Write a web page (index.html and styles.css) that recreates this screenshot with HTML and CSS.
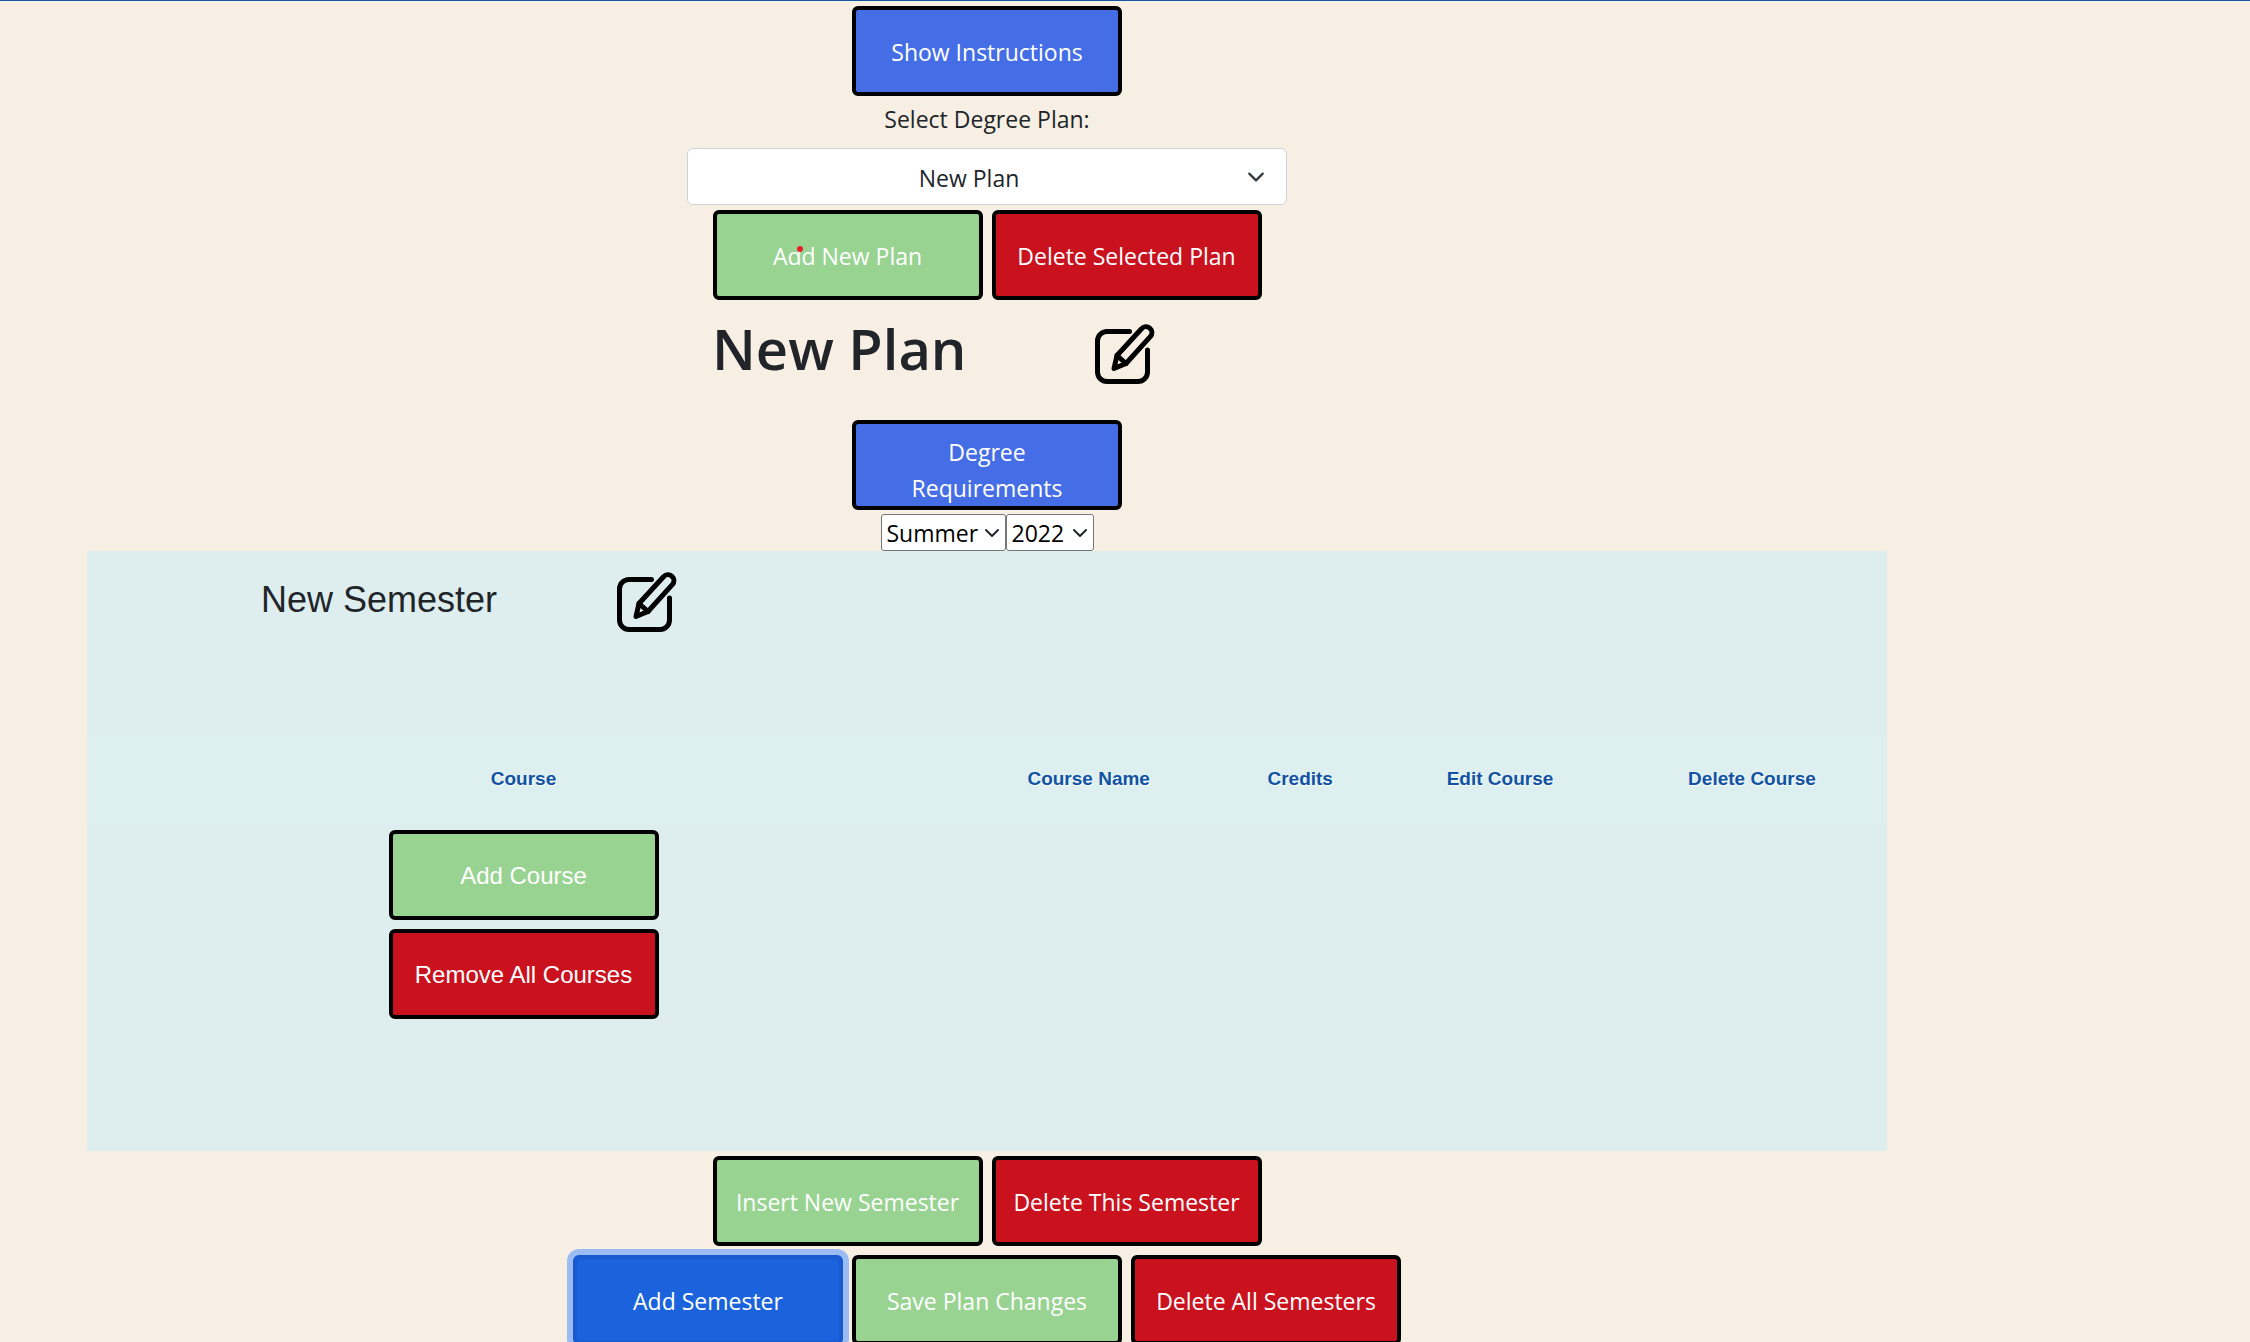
FILE: index.html
```html
<!DOCTYPE html>
<html lang="en">
<head>
<meta charset="utf-8">
<title>Degree Planner</title>
<link rel="stylesheet" href="styles.css">
</head>
<body>
<svg class="defs" aria-hidden="true">
  <symbol id="edit" viewBox="0 0 60 60">
    <g fill="none" stroke="#000" stroke-width="5" stroke-linecap="round" stroke-linejoin="round">
      <path d="M34.500 7.500H12a9.500 9.500 0 0 0-9.500 9.500v31A9.500 9.500 0 0 0 12 57.500h31a9.500 9.500 0 0 0 9.500-9.500V26"/>
      <path d="M22 31.500L46.500 4.800a5.800 5.800 0 0 1 9 7.500L31 39.500L19 44.500z"/>
      <path d="M22 31.500L31 39.500"/>
    </g>
  </symbol>
  <symbol id="chevron" viewBox="0 0 16 16">
    <path d="M2 5l6 6 6-6" fill="none" stroke="currentColor" stroke-width="2" stroke-linecap="round" stroke-linejoin="round"/>
  </symbol>
</svg>
<main class="planner">
  <button class="btn blue" type="button">Show Instructions</button>
  <label class="plan-label" for="plan">Select Degree Plan:</label>
  <div class="select plan-select">
    <select id="plan"><option>New Plan</option></select>
    <svg class="arrow"><use href="#chevron"/></svg>
  </div>
  <div class="row plan-actions">
    <button class="btn green" type="button">Add New Plan<span class="pointer"></span></button>
    <button class="btn red" type="button">Delete Selected Plan</button>
  </div>
  <header class="plan-title">
    <h1>New Plan</h1>
    <button class="edit" type="button" aria-label="Edit plan name"><svg><use href="#edit"/></svg></button>
  </header>
  <button class="btn blue" type="button">Degree Requirements</button>
  <div class="term">
    <div class="select season">
      <select aria-label="Season"><option>Summer</option></select>
      <svg class="arrow"><use href="#chevron"/></svg>
    </div>
    <div class="select year">
      <select aria-label="Year"><option>2022</option></select>
      <svg class="arrow"><use href="#chevron"/></svg>
    </div>
  </div>
  <section class="semester">
    <header class="semester-title">
      <h2>New Semester</h2>
      <button class="edit" type="button" aria-label="Edit semester name"><svg><use href="#edit"/></svg></button>
    </header>
    <table class="courses">
      <thead>
        <tr>
          <th class="c-course">Course</th>
          <th class="c-name">Course Name</th>
          <th class="c-credits">Credits</th>
          <th class="c-edit">Edit Course</th>
          <th class="c-delete">Delete Course</th>
        </tr>
      </thead>
      <tbody>
        <tr>
          <td>
            <div class="course-actions">
              <button class="btn green" type="button">Add Course</button>
              <button class="btn red" type="button">Remove All Courses</button>
            </div>
          </td>
          <td></td><td></td><td></td><td></td>
        </tr>
      </tbody>
    </table>
  </section>
  <div class="row semester-actions">
    <button class="btn green" type="button">Insert New Semester</button>
    <button class="btn red" type="button">Delete This Semester</button>
  </div>
  <div class="row">
    <button class="btn active" type="button">Add Semester</button>
    <button class="btn green" type="button">Save Plan Changes</button>
    <button class="btn red" type="button">Delete All Semesters</button>
  </div>
</main>
</body>
</html>
```

FILE: styles.css
```css
* { box-sizing: border-box; }

html { scrollbar-width: none; }

body {
  margin: 0;
  height: 100vh;
  overflow: hidden;
  background: #f8efe4;
  border-top: 1px solid #1556a3;
  color: #212529;
  font: 23px/36px "Open Sans", "Noto Sans", sans-serif;
}

button, select { font: inherit; }

.defs { display: none; }

.planner {
  display: flex;
  flex-direction: column;
  align-items: center;
  padding: 5px 276px 0 0;
}

.btn {
  position: relative;
  flex: none;
  width: 270px;
  height: 90px;
  padding: 10px 16px 8px;
  border: 4px solid #000;
  border-radius: 6px;
  color: #fff;
}

.blue { background: #456ee6; }
.green { background: #98d392; }
.red { background: #ca121f; }

.active {
  background: #1b63dd;
  border-color: #1a5ad0;
  box-shadow: 0 0 0 6px #9bbcf3;
}

.row { display: flex; gap: 9px; }

.pointer {
  position: absolute;
  left: 80px;
  top: 32px;
  width: 6px;
  height: 6px;
  border-radius: 50%;
  background: #ec1c24;
}

.plan-label { margin: 5px 0 11px; }

/* The arrow shares the grid cell of its select */
.select {
  display: grid;
  grid-template-rows: 100%;
  align-items: center;
  justify-items: end;
}

.select select {
  grid-area: 1 / 1;
  width: 100%;
  height: 100%;
  appearance: none;
  background: #fff;
  outline: none;
}

.arrow {
  grid-area: 1 / 1;
  width: 16px;
  height: 16px;
  pointer-events: none;
}

.plan-select {
  width: 100%;
  max-width: 600px;
  height: 57px;
}

.plan-select select {
  padding: 2px 54px 0 18px;
  border: 1px solid #ced4da;
  border-radius: 6px;
  color: #212529;
  text-align: center;
}

.plan-select .arrow {
  width: 18px;
  height: 18px;
  margin-right: 22px;
  color: #343a40;
}

.plan-actions { margin-top: 5px; }

.plan-title {
  display: grid;
  grid-template-columns: 1fr 1fr;
  justify-items: start;
  width: 550px;
  height: 120px;
  padding-top: 12px;
}

h1 {
  margin: 0;
  font-size: 56px;
  font-weight: 600;
  line-height: 72px;
}

.edit {
  width: 60px;
  height: 60px;
  padding: 0;
  border: 0;
  background: none;
}

.edit svg {
  display: block;
  width: 60px;
  height: 60px;
}

.plan-title .edit {
  justify-self: center;
  margin-top: 12px;
}

.term {
  display: flex;
  height: 37px;
  margin-top: 4px;
}

.term select {
  padding: 0 5px;
  border: 1px solid #767676;
  border-radius: 3px;
  color: #000;
}

.term .arrow { margin-right: 6px; }
.season { width: 125px; }
.year { width: 88px; }

.semester {
  align-self: stretch;
  min-height: 600px;
  margin: 0 87px;
  background: #deeeee;
  font-family: "Liberation Sans", Arial, sans-serif;
  font-size: 24px;
}

.semester-title {
  display: flex;
  gap: 120px;
  height: 185px;
  padding: 21px 0 0 174px;
}

h2 {
  margin: 0;
  font-size: 36px;
  font-weight: 400;
  line-height: 56px;
}

.courses {
  width: 100%;
  table-layout: fixed;
  border-collapse: collapse;
}

th {
  height: 88px;
  padding: 0 0 2px;
  background: #ddf0ef;
  color: #1152a2;
  font-size: 19px;
  text-shadow: 1px 1px 1px #fff;
}

td { padding: 6px 0 0; }

.c-course { width: 48.5%; }
.c-name { width: 14.3%; }
.c-credits { width: 9.2%; }
.c-edit { width: 13%; }
.c-delete { width: 15%; }

.course-actions {
  display: flex;
  flex-direction: column;
  align-items: center;
  gap: 9px;
}

.semester-actions { margin: 5px 0 9px; }
```
